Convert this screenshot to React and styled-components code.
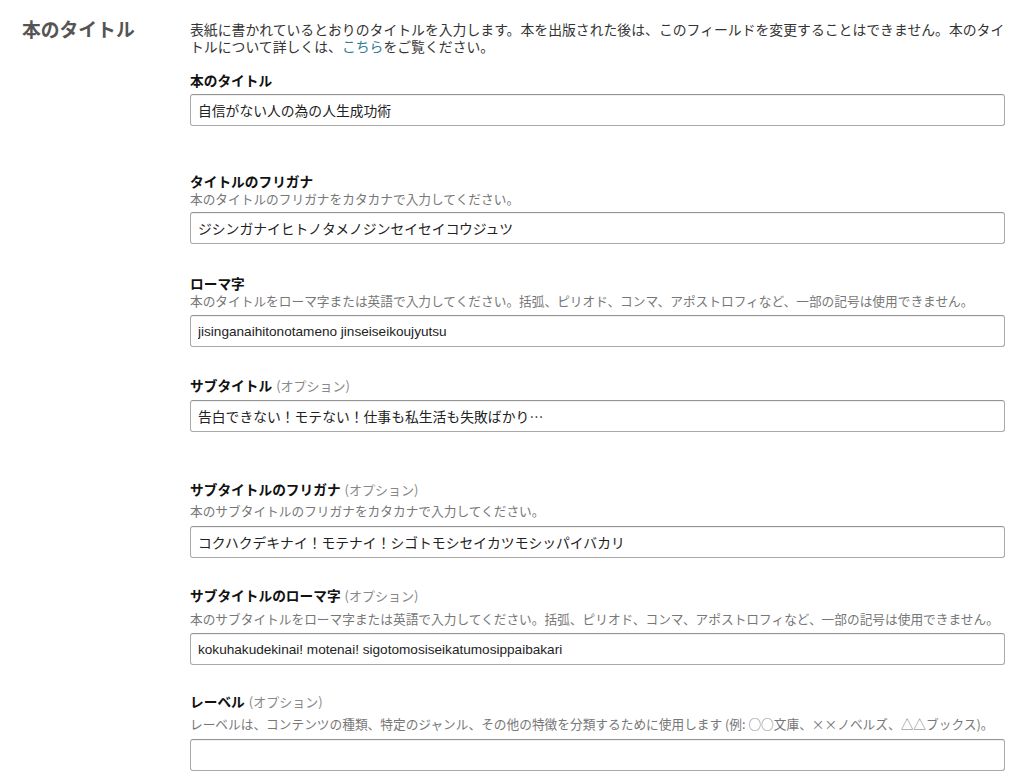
import React from "react";
import styled, { createGlobalStyle } from "styled-components";

const Global = createGlobalStyle`
  html, body { margin: 0; padding: 0; background: #fff; }
  body { font-family: "Noto Sans CJK JP", "Noto Sans", sans-serif; color: #111; }
`;

const Page = styled.div`
  display: grid;
  grid-template-columns: 190px 1fr;
  width: 1024px;
  min-height: 774px;
  box-sizing: border-box;
  overflow: hidden;
`;

const SideHeading = styled.h2`
  margin: 0;
  padding: 15px 0 0 22px;
  font-size: 18.8px;
  line-height: 28px;
  font-weight: 700;
  color: #555;
`;

const Main = styled.div`
  padding: 21px 19px 0 0;
  display: flex;
  flex-direction: column;
`;

const Description = styled.p`
  margin: 0;
  font-size: 13.85px;
  line-height: 17px;
  color: #333;
  white-space: nowrap;
`;

const Link = styled.a`
  color: #2f7d95;
  text-decoration: none;
`;

const Field = styled.div`
  display: flex;
  flex-direction: column;
  margin-top: ${(p) => p.$mt}px;
`;

const Label = styled.div`
  height: 17px;
  font-size: 13.7px;
  line-height: 17px;
  font-weight: 700;
  color: #111;
  white-space: nowrap;
`;

const Optional = styled.span`
  font-weight: 400;
  font-size: 13px;
  line-height: 17px;
  color: #888;
  margin-left: 4px;
`;

const Hint = styled.div`
  margin-top: ${(p) => p.$gap}px;
  height: 17px;
  font-size: 12.7px;
  line-height: 17px;
  color: #777;
  white-space: nowrap;
`;

const Input = styled.input`
  margin-top: ${(p) => p.$gap}px;
  height: 32px;
  width: 100%;
  box-sizing: border-box;
  border: 1px solid #a9a9a9;
  border-top-color: #949494;
  border-radius: 3px;
  box-shadow: inset 0 1px 0 rgba(0, 0, 0, 0.06);
  padding: 0 7px;
  font-family: ${(p) =>
    p.$latin
      ? `"Liberation Sans", "Noto Sans CJK JP", sans-serif`
      : `"Noto Sans CJK JP", sans-serif`};
  font-size: ${(p) => (p.$latin ? "13.6px" : "13.8px")};
  color: #222;
  background: #fff;
  outline: none;
`;

const fields = [
  { label: "本のタイトル", mt: 17, inputGap: 5, value: "自信がない人の為の人生成功術" },
  {
    label: "タイトルのフリガナ",
    mt: 47,
    hint: "本のタイトルのフリガナをカタカナで入力してください。",
    hintGap: 0,
    inputGap: 5,
    value: "ジシンガナイヒトノタメノジンセイセイコウジュツ",
  },
  {
    label: "ローマ字",
    mt: 31,
    hint: "本のタイトルをローマ字または英語で入力してください。括弧、ピリオド、コンマ、アポストロフィなど、一部の記号は使用できません。",
    hintGap: 0,
    inputGap: 6,
    value: "jisinganaihitonotameno jinseiseikoujyutsu",
    latin: true,
  },
  {
    label: "サブタイトル",
    optional: true,
    mt: 30,
    inputGap: 6,
    value: "告白できない！モテない！仕事も私生活も失敗ばかり…",
  },
  {
    label: "サブタイトルのフリガナ",
    optional: true,
    mt: 49,
    hint: "本のサブタイトルのフリガナをカタカナで入力してください。",
    hintGap: 4,
    inputGap: 7,
    value: "コクハクデキナイ！モテナイ！シゴトモシセイカツモシッパイバカリ",
  },
  {
    label: "サブタイトルのローマ字",
    optional: true,
    mt: 29,
    hint: "本のサブタイトルをローマ字または英語で入力してください。括弧、ピリオド、コンマ、アポストロフィなど、一部の記号は使用できません。",
    hintGap: 6,
    inputGap: 6,
    value: "kokuhakudekinai! motenai! sigotomosiseikatumosippaibakari",
    latin: true,
  },
  {
    label: "レーベル",
    optional: true,
    mt: 28,
    hint: "レーベルは、コンテンツの種類、特定のジャンル、その他の特徴を分類するために使用します (例: ○○文庫、××ノベルズ、△△ブックス)。",
    hintGap: 5,
    inputGap: 7,
    value: "",
  },
];

export default function App() {
  return (
    <>
      <Global />
      <Page>
        <SideHeading>本のタイトル</SideHeading>
        <Main>
          <Description>
            表紙に書かれているとおりのタイトルを入力します。本を出版された後は、このフィールドを変更することはできません。本のタイ
            <br />
            トルについて詳しくは、<Link href="#">こちら</Link>をご覧ください。
          </Description>
          {fields.map((f) => (
            <Field key={f.label} $mt={f.mt}>
              <Label>
                {f.label}
                {f.optional && <Optional>(オプション)</Optional>}
              </Label>
              {f.hint && <Hint $gap={f.hintGap}>{f.hint}</Hint>}
              <Input $gap={f.inputGap} $latin={f.latin} defaultValue={f.value} readOnly />
            </Field>
          ))}
        </Main>
      </Page>
    </>
  );
}
